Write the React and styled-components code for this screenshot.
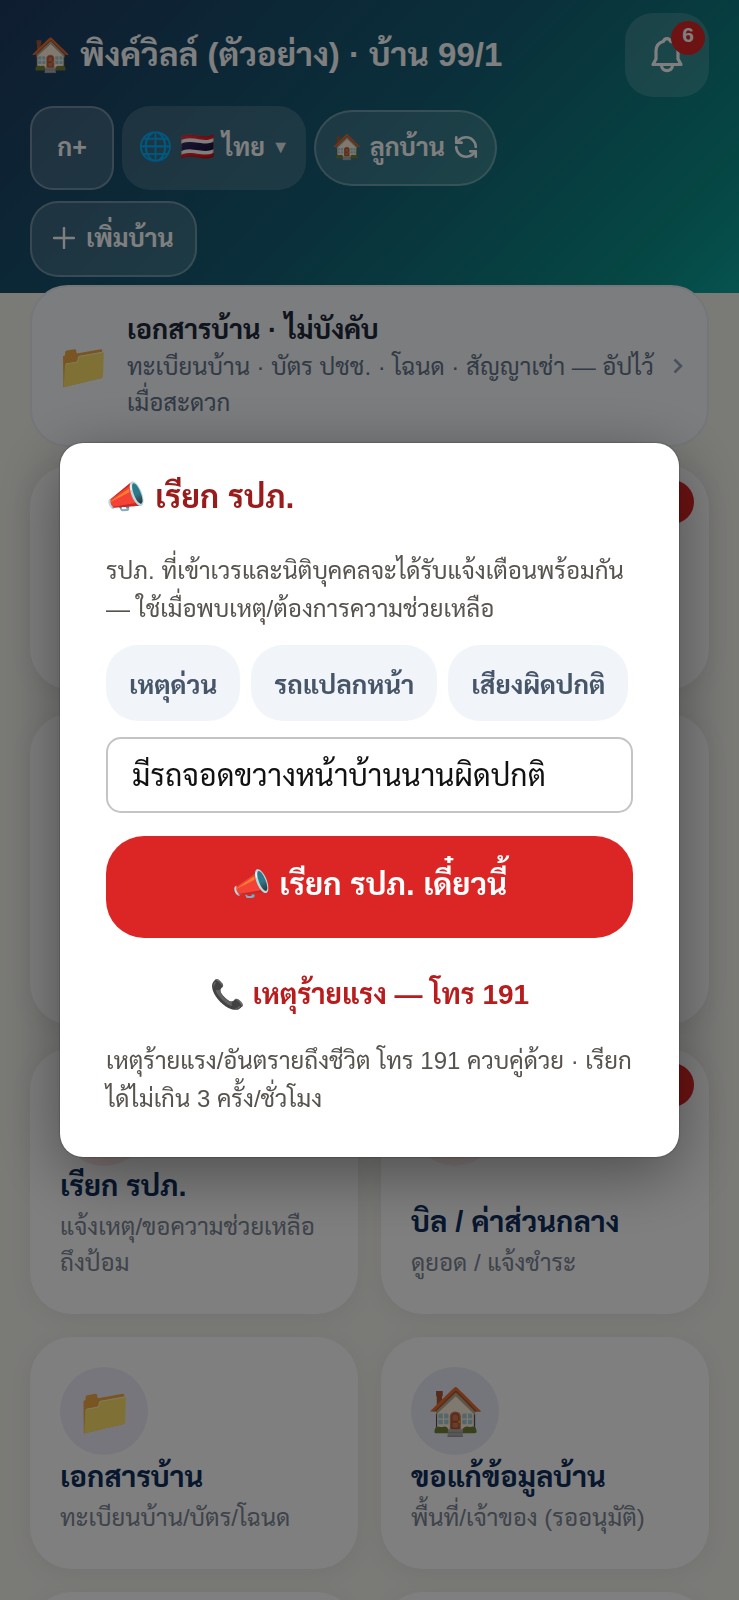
import React, { useState } from 'react';
import styled, { createGlobalStyle } from 'styled-components';
import { RefreshCcw } from 'lucide-react';

const GlobalStyle = createGlobalStyle`
  *, *::before, *::after {
    box-sizing: border-box;
  }

  body {
    margin: 0;
    height: 100vh;
    overflow: hidden;
    background: #f5f4ef;
    font-family: "Liberation Sans", Sarabun, Loma, sans-serif;
    color: #1e293b;
  }

  button, input {
    font-family: inherit;
    margin: 0;
  }

  h1, h2, h3, p {
    margin: 0;
  }
`;

const Page = styled.div`
  height: 100vh;
  overflow: hidden;
`;

const Header = styled.header`
  padding: 13px 30px 16px;
  background: linear-gradient(135deg, #1e3a5f 0%, #155e75 50%, #0b8f88 88%, #0ea5a0 100%);
  color: #fff;
`;

const HeaderTop = styled.div`
  display: flex;
  align-items: center;
  justify-content: space-between;
`;

const HeaderTitle = styled.h1`
  font-size: 33px;
  line-height: 40px;
  font-weight: 700;
`;

const BellButton = styled.button`
  position: relative;
  display: flex;
  align-items: center;
  justify-content: center;
  width: 84px;
  height: 84px;
  border: none;
  border-radius: 28px;
  background: rgba(255, 255, 255, 0.16);
  color: #fff;
`;

const BellCount = styled.span`
  position: absolute;
  top: 8px;
  right: 4px;
  width: 34px;
  height: 34px;
  border-radius: 50%;
  background: #dc2626;
  font-size: 21px;
  line-height: 28px;
  font-weight: 700;
`;

const HeaderTools = styled.div`
  display: flex;
  flex-wrap: wrap;
  align-items: center;
  gap: 11px 8px;
  margin-top: 9px;
  padding-right: 92px;
`;

const ToolButton = styled.button`
  display: flex;
  align-items: center;
  justify-content: center;
  gap: ${(props) => props.$gap || 8}px;
  min-width: 84px;
  height: ${(props) => (props.$tall ? 84 : 76)}px;
  padding: 0 ${(props) => props.$pad || 16}px 2px;
  border: ${(props) => (props.$plain ? 'none' : '2px solid rgba(255, 255, 255, 0.28)')};
  border-radius: ${(props) => props.$radius || 28}px;
  background: rgba(255, 255, 255, 0.16);
  color: #fff;
  font-size: 25px;
  line-height: 36px;
  font-weight: 700;
  white-space: nowrap;
`;

const Emoji = styled.span`
  font-size: ${(props) => props.$size || 28}px;
  line-height: 1;
`;

const Caret = styled.span`
  font-size: 18px;
  line-height: 1;
  opacity: 0.85;
`;

const Content = styled.main`
  padding: 0 30px;
  margin-top: -8px;
`;

const DocsCard = styled.a`
  display: flex;
  align-items: center;
  gap: 16px;
  min-height: 162px;
  padding: 24px;
  border: 2px solid #e8edf3;
  border-radius: 38px;
  background: #f8fafc;
  color: #94a3b8;
  text-decoration: none;
`;

const DocsText = styled.div`
  flex: 1;
`;

const DocsTitle = styled.h3`
  font-size: 27px;
  line-height: 38px;
  color: #1e293b;
`;

const DocsNote = styled.p`
  font-size: 24px;
  line-height: 36px;
  color: #64748b;
`;

const Grid = styled.div`
  display: grid;
  grid-template-columns: 1fr 1fr;
  gap: 23px;
  margin-top: 18px;
`;

const Tile = styled.div`
  position: relative;
  display: flex;
  flex-direction: column;
  min-height: ${(props) => props.$height || 232}px;
  padding: 30px 30px 33px;
  border-radius: 42px;
  background: #fff;
  box-shadow: 0 4px 24px rgba(15, 23, 42, 0.06);
`;

const TileIcon = styled.div`
  display: flex;
  align-items: center;
  justify-content: center;
  width: 88px;
  height: 88px;
  border-radius: 50%;
  background: ${(props) => props.$tint};
  font-size: 46px;
  line-height: 1;
`;

const TileTitle = styled.h3`
  margin-top: auto;
  margin-bottom: 3px;
  font-size: 29px;
  line-height: 40px;
  color: #0f2f5c;
`;

const TileNote = styled.p`
  font-size: 24px;
  line-height: 36px;
  color: #7c8796;
`;

const TileBadge = styled.span`
  position: absolute;
  top: 15px;
  right: 15px;
  width: 44px;
  height: 44px;
  border-radius: 50%;
  background: #dc2626;
`;

const Overlay = styled.div`
  position: fixed;
  inset: 0;
  display: flex;
  align-items: center;
  justify-content: center;
  padding: 0 60px;
  background: rgba(0, 0, 0, 0.5);
`;

const Dialog = styled.section`
  width: 100%;
  padding: 32px 46px 39px;
  border-radius: 23px;
  background: #fff;
  box-shadow: 0 16px 64px rgba(0, 0, 0, 0.4), 0 0 2px rgba(0, 0, 0, 0.5);
`;

const DialogTitle = styled.h2`
  font-size: 32px;
  line-height: 44px;
  color: #991b1b;
`;

const DialogText = styled.p`
  margin-top: ${(props) => props.$top}px;
  font-size: 24px;
  line-height: 38px;
  color: #57534e;
`;

const Chips = styled.div`
  display: flex;
  flex-wrap: wrap;
  gap: 11px;
  margin-top: 17px;
`;

const Chip = styled.button`
  height: 76px;
  padding: 0 23px;
  border: none;
  border-radius: 32px;
  background: #f1f5f9;
  color: #475569;
  font-size: 26px;
  font-weight: 700;
`;

const MessageInput = styled.input`
  display: block;
  width: 100%;
  height: 76px;
  margin-top: 16px;
  padding: 0 24px 4px;
  border: 2px solid #c4c4c4;
  border-radius: 15px;
  background: #fff;
  color: #111;
  font-size: 30px;
  outline: none;
`;

const CallButton = styled.button`
  display: block;
  width: 100%;
  height: 102px;
  margin-top: 23px;
  padding: 0 0 10px;
  border: none;
  border-radius: 38px;
  background: #dc2626;
  color: #fff;
  font-size: 31px;
  font-weight: 700;
`;

const PhoneLink = styled.a`
  display: block;
  margin-top: 38px;
  font-size: 28px;
  line-height: 38px;
  font-weight: 700;
  text-align: center;
  text-decoration: none;
  color: #b91c1c;
`;

const BellIcon = () => (
  <svg width="36" height="38" viewBox="0 0 36 38" fill="none" stroke="currentColor" strokeWidth="3.2" strokeLinecap="round" strokeLinejoin="round">
    <path d="M4 28.5 H32 L29 23 V15 C29 9.5 25.5 6.5 21.5 5.3 C20.5 1.7 15.5 1.7 14.5 5.3 C10.5 6.5 7 9.5 7 15 V23 Z" />
    <path d="M12.5 29 C12.5 36.5 23.5 36.5 23.5 29" />
  </svg>
);

const PlusIcon = () => (
  <svg width="22" height="22" viewBox="0 0 22 22" stroke="currentColor" strokeWidth="2.4" strokeLinecap="round">
    <path d="M11 1 V21 M1 11 H21" />
  </svg>
);

const ChevronIcon = () => (
  <svg width="10" height="16" viewBox="0 0 10 16" fill="none" stroke="currentColor" strokeWidth="2.6">
    <path d="M1.5 1.5 L8 8 L1.5 14.5" />
  </svg>
);

const reasons = ['เหตุด่วน', 'รถแปลกหน้า', 'เสียงผิดปกติ'];

const tiles = [
  { id: 1, height: 225 },
  { id: 2, height: 225, badge: true },
  { id: 3, height: 312 },
  { id: 4, height: 312 },
  { id: 5, icon: '📣', tint: '#fde8e8', title: 'เรียก รปภ.', note: 'แจ้งเหตุ/ขอความช่วยเหลือถึงป้อม' },
  { id: 6, icon: '🧾', tint: '#fdefec', title: 'บิล / ค่าส่วนกลาง', note: 'ดูยอด / แจ้งชำระ', badge: true },
  { id: 7, icon: '📁', tint: '#f1edfb', title: 'เอกสารบ้าน', note: 'ทะเบียนบ้าน/บัตร/โฉนด' },
  { id: 8, icon: '🏠', tint: '#ebecf9', title: 'ขอแก้ข้อมูลบ้าน', note: 'พื้นที่/เจ้าของ (รออนุมัติ)' },
  { id: 9 },
  { id: 10 },
];

const App = () => {
  const [message, setMessage] = useState('มีรถจอดขวางหน้าบ้านนานผิดปกติ');

  return (
    <Page>
      <GlobalStyle />
      <Header>
        <HeaderTop>
          <HeaderTitle>🏠 พิงค์วิลล์ (ตัวอย่าง) · บ้าน 99/1</HeaderTitle>
          <BellButton type="button">
            <BellIcon />
            <BellCount>6</BellCount>
          </BellButton>
        </HeaderTop>
        <HeaderTools>
          <ToolButton type="button" $tall $radius={23}>ก+</ToolButton>
          <ToolButton type="button" $tall $plain $gap={7}>
            <Emoji>🌐</Emoji>
            <Emoji>🇹🇭</Emoji>
            ไทย
            <Caret>▼</Caret>
          </ToolButton>
          <ToolButton type="button" $radius={38}>
            <Emoji $size={24}>🏠</Emoji>
            ลูกบ้าน
            <RefreshCcw size={26} strokeWidth={2.4} />
          </ToolButton>
          <ToolButton type="button" $gap={11} $pad={21}>
            <PlusIcon />
            เพิ่มบ้าน
          </ToolButton>
        </HeaderTools>
      </Header>

      <Content>
        <DocsCard href="#documents">
          <Emoji $size={44}>📁</Emoji>
          <DocsText>
            <DocsTitle>เอกสารบ้าน · ไม่บังคับ</DocsTitle>
            <DocsNote>ทะเบียนบ้าน · บัตร ปชช. · โฉนด · สัญญาเช่า — อัปไว้เมื่อสะดวก</DocsNote>
          </DocsText>
          <ChevronIcon />
        </DocsCard>
        <Grid>
          {tiles.map((tile) => (
            <Tile key={tile.id} $height={tile.height}>
              {tile.badge && <TileBadge />}
              {tile.icon && <TileIcon $tint={tile.tint}>{tile.icon}</TileIcon>}
              {tile.title && <TileTitle>{tile.title}</TileTitle>}
              {tile.note && <TileNote>{tile.note}</TileNote>}
            </Tile>
          ))}
        </Grid>
      </Content>

      <Overlay>
        <Dialog role="dialog" aria-modal="true" aria-labelledby="call-title">
          <DialogTitle id="call-title">📣 เรียก รปภ.</DialogTitle>
          <DialogText $top={33}>
            รปภ. ที่เข้าเวรและนิติบุคคลจะได้รับแจ้งเตือนพร้อมกัน — ใช้เมื่อพบเหตุ/ต้องการความช่วยเหลือ
          </DialogText>
          <Chips>
            {reasons.map((reason) => (
              <Chip key={reason} type="button" onClick={() => setMessage(reason)}>{reason}</Chip>
            ))}
          </Chips>
          <MessageInput
            type="text"
            name="message"
            aria-labelledby="call-title"
            value={message}
            onChange={(e) => setMessage(e.target.value)}
          />
          <CallButton type="button">📣 เรียก รปภ. เดี๋ยวนี้</CallButton>
          <PhoneLink href="tel:191">📞 เหตุร้ายแรง — โทร 191</PhoneLink>
          <DialogText $top={28}>
            เหตุร้ายแรง/อันตรายถึงชีวิต โทร 191 ควบคู่ด้วย · เรียกได้ไม่เกิน 3 ครั้ง/ชั่วโมง
          </DialogText>
        </Dialog>
      </Overlay>
    </Page>
  );
};

export default App;
